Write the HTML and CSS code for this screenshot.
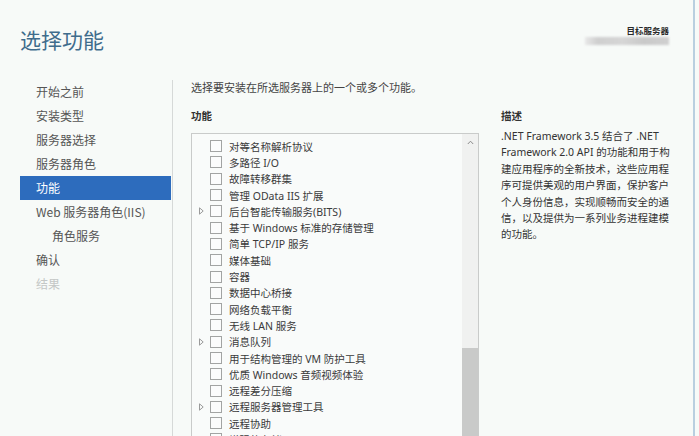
FILE: index.html
```html
<!DOCTYPE html>
<html lang="zh-CN">
<head>
<meta charset="utf-8">
<title>选择功能</title>
<link rel="stylesheet" href="styles.css">
</head>
<body>
<div class="window">
  <div class="frame">
    <header class="header">
      <h1 class="title">选择功能</h1>
      <div class="target">
        <div class="target-label">目标服务器</div>
        <div class="target-name"></div>
      </div>
    </header>
    <div class="body">
      <nav class="nav">
        <div class="nav-item">开始之前</div>
        <div class="nav-item">安装类型</div>
        <div class="nav-item">服务器选择</div>
        <div class="nav-item">服务器角色</div>
        <div class="nav-item active">功能</div>
        <div class="nav-item">Web 服务器角色(IIS)</div>
        <div class="nav-item sub">角色服务</div>
        <div class="nav-item">确认</div>
        <div class="nav-item disabled">结果</div>
      </nav>
      <main class="content">
        <p class="intro">选择要安装在所选服务器上的一个或多个功能。</p>
        <div class="columns">
          <section class="features">
            <h2 class="heading">功能</h2>
            <div class="listbox">
              <ul class="list">
                <li class="item"><span class="exp"></span><span class="cb"></span>对等名称解析协议</li>
                <li class="item"><span class="exp"></span><span class="cb"></span>多路径 I/O</li>
                <li class="item"><span class="exp"></span><span class="cb"></span>故障转移群集</li>
                <li class="item"><span class="exp"></span><span class="cb"></span>管理 OData IIS 扩展</li>
                <li class="item"><span class="exp"><svg width="5" height="8" viewBox="0 0 5 8"><path d="M0.5 0.8 L4.2 4 L0.5 7.2 Z" fill="none" stroke="#9a9a9a" stroke-width="1"/></svg></span><span class="cb"></span>后台智能传输服务(BITS)</li>
                <li class="item"><span class="exp"></span><span class="cb"></span>基于 Windows 标准的存储管理</li>
                <li class="item"><span class="exp"></span><span class="cb"></span>简单 TCP/IP 服务</li>
                <li class="item"><span class="exp"></span><span class="cb"></span>媒体基础</li>
                <li class="item"><span class="exp"></span><span class="cb"></span>容器</li>
                <li class="item"><span class="exp"></span><span class="cb"></span>数据中心桥接</li>
                <li class="item"><span class="exp"></span><span class="cb"></span>网络负载平衡</li>
                <li class="item"><span class="exp"></span><span class="cb"></span>无线 LAN 服务</li>
                <li class="item"><span class="exp"><svg width="5" height="8" viewBox="0 0 5 8"><path d="M0.5 0.8 L4.2 4 L0.5 7.2 Z" fill="none" stroke="#9a9a9a" stroke-width="1"/></svg></span><span class="cb"></span>消息队列</li>
                <li class="item"><span class="exp"></span><span class="cb"></span>用于结构管理的 VM 防护工具</li>
                <li class="item"><span class="exp"></span><span class="cb"></span>优质 Windows 音频视频体验</li>
                <li class="item"><span class="exp"></span><span class="cb"></span>远程差分压缩</li>
                <li class="item"><span class="exp"><svg width="5" height="8" viewBox="0 0 5 8"><path d="M0.5 0.8 L4.2 4 L0.5 7.2 Z" fill="none" stroke="#9a9a9a" stroke-width="1"/></svg></span><span class="cb"></span>远程服务器管理工具</li>
                <li class="item"><span class="exp"></span><span class="cb"></span>远程协助</li>
                <li class="item"><span class="exp"></span><span class="cb"></span>增强的存储</li>
              </ul>
              <div class="scrollbar">
                <div class="arrow"><svg width="7" height="5" viewBox="0 0 7 5"><path d="M0.8 4 L3.5 1.2 L6.2 4" fill="none" stroke="#8a8a8a" stroke-width="1"/></svg></div>
                <div class="track"></div>
                <div class="thumb"></div>
              </div>
            </div>
          </section>
          <aside class="desc">
            <h2 class="heading">描述</h2>
            <p class="desc-text">.NET Framework 3.5 结合了 .NET<br>Framework 2.0 API 的功能和用于构<br>建应用程序的全新技术，这些应用程<br>序可提供美观的用户界面，保护客户<br>个人身份信息，实现顺畅而安全的通<br>信，以及提供为一系列业务进程建模<br>的功能。</p>
          </aside>
        </div>
      </main>
    </div>
  </div>
  <div class="edge"></div>
</div>
</body>
</html>
```

FILE: styles.css
```css
* { box-sizing: border-box; }

html, body {
  margin: 0;
  padding: 0;
}

body {
  width: 699px;
  height: 436px;
  overflow: hidden;
  background: #f7faf8;
  font-family: "Noto Sans", "Noto Sans CJK SC", sans-serif;
  color: #333;
}

.window {
  display: flex;
  height: 436px;
}

.frame {
  width: 693px;
  display: flex;
  flex-direction: column;
  background: #f7faf8;
}

.edge {
  width: 2px;
  background: #b9cfe0;
}

.header {
  height: 80px;
  display: flex;
  justify-content: space-between;
  align-items: flex-start;
  padding: 0 24px 0 20px;
}

.title {
  margin: 24px 0 0;
  font-size: 21px;
  font-weight: 400;
  line-height: 30px;
  color: #3f6c8c;
  font-family: "Noto Sans CJK SC", sans-serif;
}

.target {
  margin-top: 24px;
  display: flex;
  flex-direction: column;
  align-items: flex-end;
}

.target-label {
  font-size: 8.5px;
  line-height: 12px;
  font-weight: 700;
  color: #2a2a2a;
  font-family: "Noto Sans CJK SC", sans-serif;
}

.target-name {
  margin-top: 1px;
  width: 84px;
  height: 8px;
  background: linear-gradient(90deg, #e8e8e8 0%, #cfcfcf 15%, #d6d6d6 45%, #c9c9c9 70%, #d0d0d0 100%);
  filter: blur(1px);
}

.body {
  flex: 1;
  display: flex;
  min-height: 0;
}

.nav {
  width: 173px;
  flex: none;
  padding: 0 1px 0 20px;
  border-right: 1px solid #d6d9d8;
  font-family: "Noto Sans CJK SC", sans-serif;
}

.nav-item {
  height: 24px;
  line-height: 24px;
  padding-left: 16px;
  font-size: 12px;
  color: #555;
  white-space: nowrap;
}

.nav-item.sub {
  padding-left: 32px;
}

.nav-item.active {
  background: #2d6cbd;
  color: #fff;
}

.nav-item.disabled {
  color: #c4c7c6;
}

.content {
  flex: 1;
  padding: 0 0 0 18px;
  min-width: 0;
}

.intro {
  margin: 0;
  padding-top: 0;
  font-size: 11px;
  line-height: 16px;
  color: #444;
}

.columns {
  display: flex;
  gap: 22px;
  margin-top: 12px;
}

.features {
  width: 288px;
  flex: none;
}

.heading {
  margin: 0;
  font-size: 10.5px;
  line-height: 16px;
  font-weight: 700;
  color: #333;
}

.listbox {
  margin-top: 9px;
  height: 320px;
  border: 1px solid #c9cbca;
  background: #f9fbfa;
  display: flex;
}

.list {
  flex: 1;
  margin: 0;
  padding: 4px 0 0 6px;
  list-style: none;
}

.item {
  height: 16.3px;
  display: flex;
  align-items: center;
  font-size: 10.5px;
  color: #3a3a3a;
  white-space: nowrap;
}

.exp {
  width: 12px;
  flex: none;
  display: flex;
  align-items: center;
  padding-left: 1px;
}

.cb {
  width: 12px;
  height: 12px;
  flex: none;
  border: 1px solid #a2a4a3;
  background: #fbfcfc;
  margin-right: 7px;
}

.scrollbar {
  width: 16px;
  flex: none;
  display: flex;
  flex-direction: column;
  background: #f0f1f0;
}

.arrow {
  height: 16px;
  display: flex;
  align-items: center;
  justify-content: center;
}

.track {
  height: 198px;
}

.thumb {
  flex: 1;
  background: #c9cac9;
}

.desc {
  flex: 1;
}

.desc-text {
  margin: 4px 0 0;
  font-size: 10.5px;
  line-height: 16.4px;
  color: #333;
  white-space: nowrap;
}
```
